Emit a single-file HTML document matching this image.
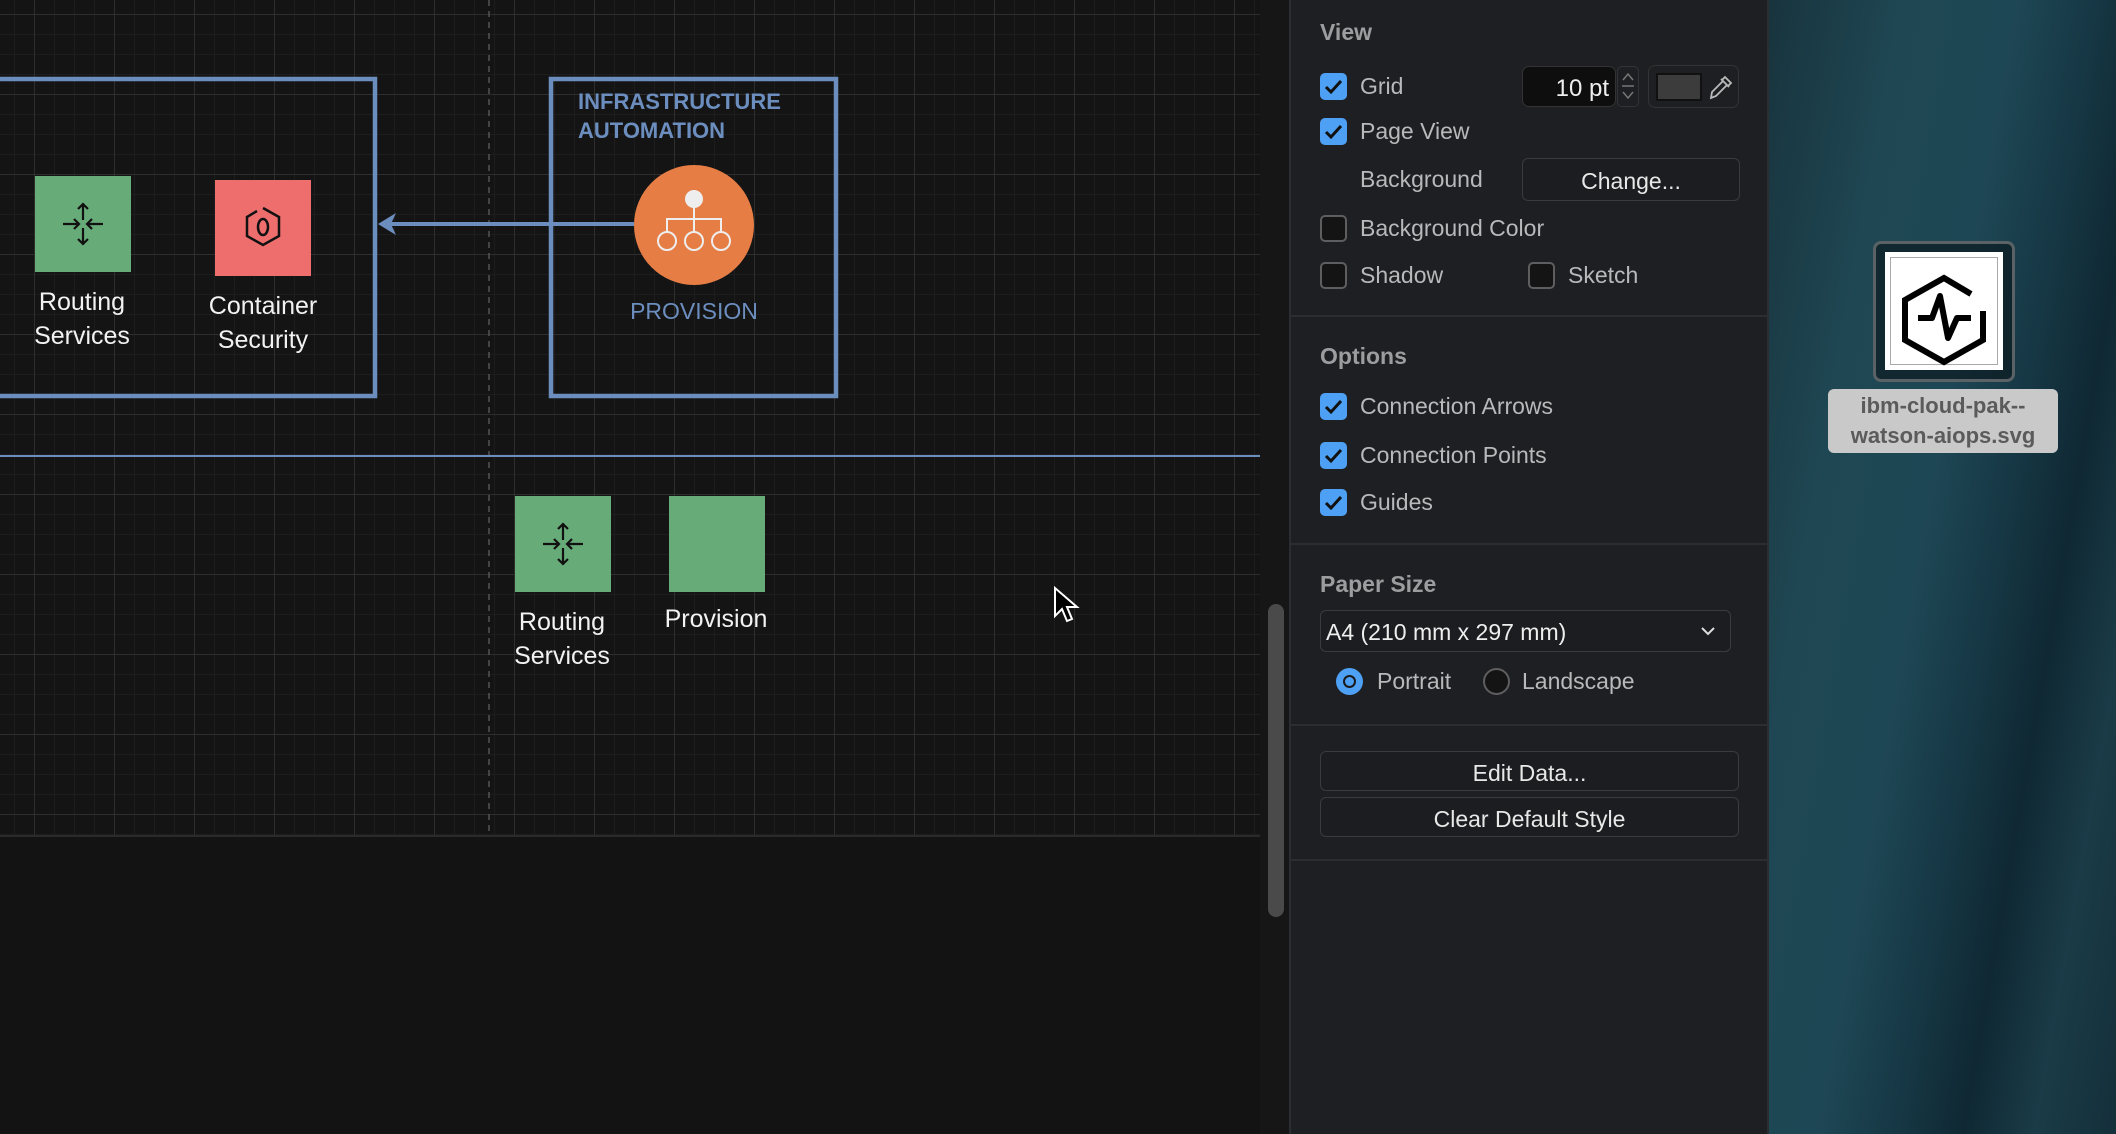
<!DOCTYPE html>
<html><head><meta charset="utf-8"><style>
*{margin:0;padding:0;box-sizing:border-box}
body{width:2116px;height:1134px;overflow:hidden;background:#121212;font-family:"Liberation Sans",sans-serif;position:relative}
.abs{position:absolute}
#canvas{left:0;top:0;width:1260px;height:835px;background-color:#141414;
background-image:
linear-gradient(90deg,#2e2e2e 0 1px,transparent 1px),
linear-gradient(0deg,#2e2e2e 0 1px,transparent 1px),
linear-gradient(90deg,#1d1d1d 0 1px,transparent 1px),
linear-gradient(0deg,#1d1d1d 0 1px,transparent 1px);
background-size:80px 80px,80px 80px,20px 20px,20px 20px;
background-position:34px 0,0 15px,14px 0,0 15px;}
#below{left:0;top:835px;width:1260px;height:299px;background:#131313;border-top:2px solid #2a2a2a}
#strip{left:1260px;top:0;width:29px;height:1134px;background:#161616}
#thumb{left:1268px;top:604px;width:16px;height:313px;background:#4a4a4a;border-radius:8px}
#panel{left:1289px;top:0;width:480px;height:1134px;background:#1e1f22;border-left:2px solid #2c2d30;border-right:2px solid #2c2d30;color:#b9b9bb;font-size:23px}
.hd{position:absolute;left:29px;font-weight:bold;color:#9d9d9f;font-size:23px;line-height:26px}
.cb{position:absolute;left:29px;width:27px;height:27px;border-radius:5px;background:#4ea0f5}
.cb svg{position:absolute;left:4px;top:5px}
.cbo{position:absolute;width:27px;height:27px;border-radius:5px;background:#141414;border:2.5px solid #5e5e60}
.lb{position:absolute;white-space:nowrap;line-height:26px}
.div{position:absolute;left:0;width:476px;height:2px;background:#2c2d30}
.btn{position:absolute;border:1.5px solid #3a3b3e;border-radius:6px;background:#1c1d20;color:#e8e8e8;text-align:center}
#desk{left:1769px;top:0;width:347px;height:1134px;background:linear-gradient(100deg,#18343e 0%,#1f4753 25%,#1e4755 45%,#163744 60%,#0f2833 72%,#1a3b47 85%,#142f3a 100%)}
</style></head><body>
<div id="canvas" class="abs"></div>
<svg class="abs" style="left:0;top:0" width="1260" height="835">
<line x1="489" y1="0" x2="489" y2="835" stroke="#555" stroke-width="1.5" stroke-dasharray="6 5"/>
<line x1="0" y1="456" x2="1260" y2="456" stroke="#6c8ebf" stroke-width="2"/>
<rect x="-10" y="79" width="385" height="317" fill="none" stroke="#6c8ebf" stroke-width="4.5"/>
<rect x="551" y="79" width="285" height="317" fill="none" stroke="#6c8ebf" stroke-width="4.5"/>
<line x1="634" y1="224" x2="385" y2="224" stroke="#6c8ebf" stroke-width="4"/>
<path d="M378 224 L396 213 L391 224 L396 235 Z" fill="#6c8ebf"/>
<rect x="35" y="176" width="96" height="96" fill="#67ab78"/>
<rect x="215" y="180" width="96" height="96" fill="#ee6e6e"/>
<rect x="515" y="496" width="96" height="96" fill="#67ab78"/>
<rect x="669" y="496" width="96" height="96" fill="#67ab78"/>
<g fill="none" stroke="#111" stroke-width="2.2">
<g transform="translate(83,224)"><path d="M0-20V-4M-5-15L0-20L5-15M0 20V4M-5 15L0 20L5 15M-20 0H-4M-9-5L-4 0L-9 5M20 0H4M9-5L4 0L9 5"/></g>
<g transform="translate(563,544)"><path d="M0-20V-4M-5-15L0-20L5-15M0 20V4M-5 15L0 20L5 15M-20 0H-4M-9-5L-4 0L-9 5M20 0H4M9-5L4 0L9 5"/></g>
<path d="M263 208 L279 217 V236 L263 245 L247 236 V217 L257 211" stroke-width="2.5"/>
<ellipse cx="263" cy="227" rx="5" ry="8" stroke-width="2.5"/>
</g>
<circle cx="694" cy="225" r="60" fill="#e67d45"/>
<g stroke="#eee" stroke-width="2" fill="none">
<circle cx="694" cy="199" r="8" fill="#eee"/>
<path d="M694 207V219M667 232V219H721V232M694 219V232"/>
<circle cx="667" cy="241" r="9"/><circle cx="694" cy="241" r="9"/><circle cx="721" cy="241" r="9"/>
</g>
<g font-family="Liberation Sans" font-size="25" fill="#f2f2f2" text-anchor="middle">
<text x="82" y="310">Routing</text><text x="82" y="344">Services</text>
<text x="263" y="314">Container</text><text x="263" y="348">Security</text>
<text x="562" y="630">Routing</text><text x="562" y="664">Services</text>
<text x="716" y="627">Provision</text>
</g>
<text x="694" y="319" font-size="23" fill="#6c8ebf" text-anchor="middle" font-family="Liberation Sans">PROVISION</text>
<g font-size="22" font-weight="bold" fill="#6c8ebf" font-family="Liberation Sans">
<text x="578" y="109">INFRASTRUCTURE</text><text x="578" y="138">AUTOMATION</text></g>
<path d="M1055 588 L1055 616 L1062 609 L1067 621 L1072 619 L1067 607 L1077 607 Z" fill="#000" stroke="#fff" stroke-width="2"/>
</svg>
<div id="below" class="abs"></div>
<div id="strip" class="abs"></div>
<div id="thumb" class="abs"></div>
<div id="panel" class="abs">
<div class="hd" style="top:19px">View</div>
<div class="cb" style="top:73px"><svg width="19" height="17"><path d="M2 9L7 14L17 3" stroke="#111" stroke-width="3" fill="none"/></svg></div>
<div class="lb" style="left:69px;top:73px">Grid</div>
<div class="abs" style="left:231px;top:66px;width:94px;height:41px;background:#0e0e0e;border:1.5px solid #333;border-radius:7px;color:#eee;text-align:right;padding:8px 6px 0 0;font-size:24px">10 pt</div>
<div class="abs" style="left:326px;top:66px;width:22px;height:41px;border:1.5px solid #333;border-radius:5px"><svg width="20" height="38"><path d="M5 13L10 7L15 13M5 25L10 31L15 25M4 19H16" stroke="#777" stroke-width="1.5" fill="none"/></svg></div>
<div class="abs" style="left:357px;top:65px;width:91px;height:43px;border:1.5px solid #333;border-radius:7px"></div>
<div class="abs" style="left:365px;top:73px;width:46px;height:28px;background:#3c3c3c;border:2px solid #111"></div>
<svg class="abs" style="left:416px;top:74px" width="26" height="28"><path d="M4 24L5 18L16 7L20 11L9 22Z M14 5L22 13 M18 3L24 9L21 12L15 6Z" stroke="#bbb" stroke-width="1.8" fill="none"/></svg>
<div class="cb" style="top:118px"><svg width="19" height="17"><path d="M2 9L7 14L17 3" stroke="#111" stroke-width="3" fill="none"/></svg></div>
<div class="lb" style="left:69px;top:118px">Page View</div>
<div class="lb" style="left:69px;top:166px">Background</div>
<div class="btn" style="left:231px;top:158px;width:218px;height:43px;padding-top:9px;font-size:23px">Change...</div>
<div class="cbo" style="left:29px;top:215px"></div>
<div class="lb" style="left:69px;top:215px">Background Color</div>
<div class="cbo" style="left:29px;top:262px"></div>
<div class="lb" style="left:69px;top:262px">Shadow</div>
<div class="cbo" style="left:237px;top:262px"></div>
<div class="lb" style="left:277px;top:262px">Sketch</div>
<div class="div" style="top:315px"></div>
<div class="hd" style="top:343px">Options</div>
<div class="cb" style="top:393px"><svg width="19" height="17"><path d="M2 9L7 14L17 3" stroke="#111" stroke-width="3" fill="none"/></svg></div>
<div class="lb" style="left:69px;top:393px">Connection Arrows</div>
<div class="cb" style="top:442px"><svg width="19" height="17"><path d="M2 9L7 14L17 3" stroke="#111" stroke-width="3" fill="none"/></svg></div>
<div class="lb" style="left:69px;top:442px">Connection Points</div>
<div class="cb" style="top:489px"><svg width="19" height="17"><path d="M2 9L7 14L17 3" stroke="#111" stroke-width="3" fill="none"/></svg></div>
<div class="lb" style="left:69px;top:489px">Guides</div>
<div class="div" style="top:543px"></div>
<div class="hd" style="top:571px">Paper Size</div>
<div class="abs" style="left:29px;top:610px;width:411px;height:42px;border:1.5px solid #3a3b3e;border-radius:6px;background:#1c1d20;color:#eee;padding:8px 0 0 5px;font-size:23px">A4 (210 mm x 297 mm)<svg style="position:absolute;right:14px;top:14px" width="16" height="12"><path d="M2 3L8 9L14 3" stroke="#ddd" stroke-width="2" fill="none"/></svg></div>
<div class="abs" style="left:45px;top:668px;width:27px;height:27px;border-radius:50%;background:#4ea0f5"><div class="abs" style="left:7px;top:7px;width:13px;height:13px;border-radius:50%;background:#1a1a1a"></div><div class="abs" style="left:9px;top:9px;width:9px;height:9px;border-radius:50%;background:#4ea0f5"></div></div>
<div class="lb" style="left:86px;top:668px">Portrait</div>
<div class="abs" style="left:192px;top:668px;width:27px;height:27px;border-radius:50%;background:#141414;border:2.5px solid #5e5e60"></div>
<div class="lb" style="left:231px;top:668px">Landscape</div>
<div class="div" style="top:724px"></div>
<div class="btn" style="left:29px;top:751px;width:419px;height:40px;padding-top:8px">Edit Data...</div>
<div class="btn" style="left:29px;top:797px;width:419px;height:40px;padding-top:8px">Clear Default Style</div>
<div class="div" style="top:859px"></div>
</div>
<div id="desk" class="abs"></div>
<div class="abs" style="left:1873px;top:241px;width:142px;height:141px;border:3px solid #5a6266;border-radius:8px;background:rgba(10,20,25,0.6)"></div>
<div class="abs" style="left:1885px;top:252px;width:118px;height:118px;background:#fff"><div class="abs" style="left:5px;top:5px;width:108px;height:108px;border:1px solid #aaa"></div>
<svg class="abs" style="left:0;top:0" width="118" height="118"><path d="M86 42L59 26L20 48V88L59 110L98 88V59" stroke="#000" stroke-width="6" fill="none" stroke-linejoin="miter"/><path d="M33 66H47L55 44L63 86L72 66H86" stroke="#000" stroke-width="6" fill="none" stroke-linejoin="round"/></svg></div>
<div class="abs" style="left:1828px;top:389px;width:230px;height:64px;background:#c9c9c9;border-radius:6px;color:#5b5b5b;font-weight:bold;font-size:22px;text-align:center;line-height:30px;padding-top:2px">ibm-cloud-pak--<br>watson-aiops.svg</div>
</body></html>
